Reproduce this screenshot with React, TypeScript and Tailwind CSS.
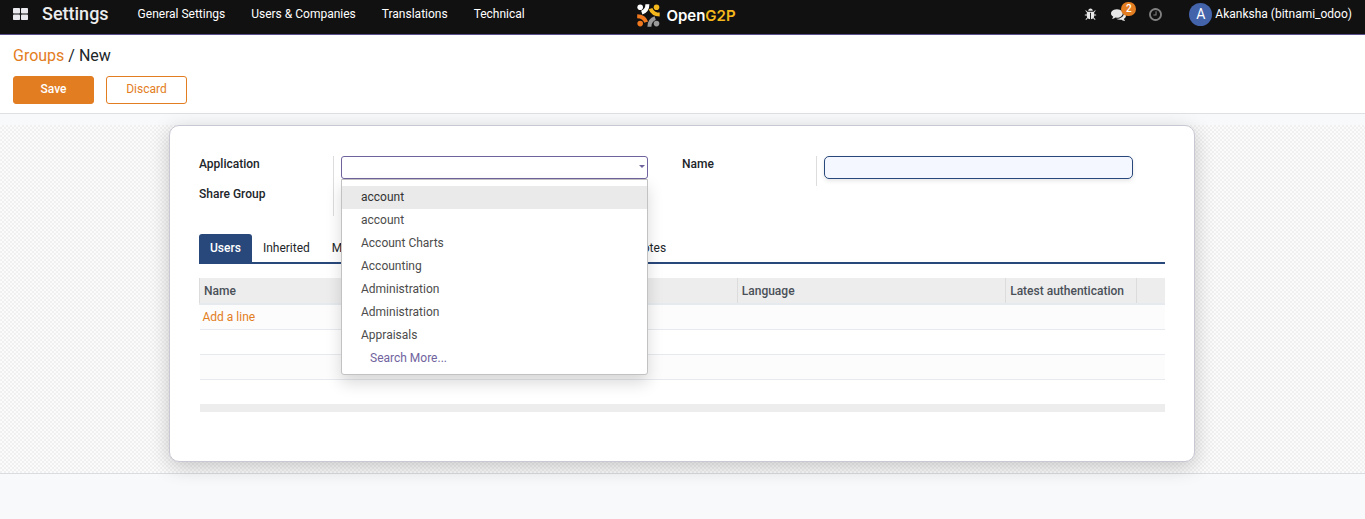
import React from "react";

const menuItems = ["General Settings", "Users & Companies", "Translations", "Technical"];
const tabs = ["Users", "Inherited", "Menus", "Views", "Access Rights", "Record Rules", "Notes"];
const applications = [
  "account",
  "account",
  "Account Charts",
  "Accounting",
  "Administration",
  "Administration",
  "Appraisals",
];

function AppsIcon() {
  return (
    <svg width="15" height="12" viewBox="0 0 15 12" fill="#e9e9ee" aria-hidden="true">
      <rect x="0" y="0" width="7" height="5.5" rx="0.8" />
      <rect x="8" y="0" width="7" height="5.5" rx="0.8" />
      <rect x="0" y="6.5" width="7" height="5.5" rx="0.8" />
      <rect x="8" y="6.5" width="7" height="5.5" rx="0.8" />
    </svg>
  );
}

function BugIcon() {
  return (
    <svg width="13" height="13" viewBox="0 0 1792 1792" fill="currentColor" aria-hidden="true">
      <path d="M1696 960q0 26-19 45t-45 19h-224q0 171-67 290l208 209q19 19 19 45t-19 45q-18 19-45 19t-45-19l-198-197q-5 5-15 13t-42 28.5-65 36.5-82 29-97 13v-896h-128v896q-51 0-101.5-13.5t-87-33-66-39-43.5-32.5l-15-14-183 207q-20 21-48 21-24 0-43-16-19-18-20.500-44.500t15.500-46.500l202-227q-58-114-58-274h-224q-26 0-45-19t-19-45 19-45 45-19h224v-294l-173-173q-19-19-19-45t19-45 45-19 45 19l173 173h844l173-173q19-19 45-19t45 19 19 45-19 45l-173 173v294h224q26 0 45 19t19 45zm-480-576h-640q0-133 93.500-226.500t226.500-93.500 226.500 93.500 93.500 226.500z" />
    </svg>
  );
}

function CommentsIcon() {
  return (
    <svg width="15" height="15" viewBox="0 0 1792 1792" fill="currentColor" aria-hidden="true">
      <path d="M1408 768q0 139-94 257t-256.500 186.500-353.500 68.500q-86 0-176-16-124 88-278 128-36 9-86 16h-3q-11 0-20.500-8t-11.500-21q-1-3-1-6.500t.5-6.500 2-6l2.500-5 3.500-5.500 4-5 4.500-5 4-4.500q5-6 23-25t26-29.500 22.500-29 25-38.500 20.500-44q-124-72-195-177t-71-224q0-139 94-257t256.500-186.500 353.500-68.500 353.500 68.500 256.500 186.500 94 257zm384 256q0 120-71 224.500t-195 176.500q10 24 20.500 44t25 38.500 22.500 29 26 29.500 23 25q1 1 4 4.500t4.500 5 4 5 3.500 5.500l2.500 5 2 6 .5 6.500-1 6.500q-3 14-13 22t-22 7q-50-7-86-16-154-40-278-128-90 16-176 16-271 0-472-132 58 4 88 4 161 0 309-45t264-129q125-92 192-212t67-254q0-77-23-152 129 71 204 178t75 230z" />
    </svg>
  );
}

function ClockIcon() {
  return (
    <svg width="15" height="15" viewBox="0 0 1792 1792" fill="currentColor" aria-hidden="true">
      <path d="M1024 544v448q0 14-9 23t-23 9h-320q-14 0-23-9t-9-23v-64q0-14 9-23t23-9h224v-352q0-14 9-23t23-9h64q14 0 23 9t9 23zm416 352q0-148-73-273t-198-198-273-73-273 73-198 198-73 273 73 273 198 198 273 73 273-73 198-198 73-273zm224 0q0 209-103 385.500t-279.500 279.500-385.500 103-385.500-103-279.500-279.500-103-385.500 103-385.500 279.500-279.500 385.500-103 385.500 103 279.500 279.500 103 385.500z" />
    </svg>
  );
}

function LogoMark() {
  return (
    <svg width="23" height="23" viewBox="0 0 23 23" fill="none" aria-hidden="true">
      <circle cx="3.200" cy="3.200" r="2.800" fill="#fff" />
      <circle cx="19.500" cy="3.200" r="2.800" fill="#f5b81c" />
      <circle cx="3.200" cy="19.600" r="2.800" fill="#f0781e" />
      <circle cx="19.500" cy="19.600" r="2.800" fill="#9a9a9a" />
      <path d="M10.400 0.300C10.400 4.600 8.600 7.300 4.800 8.600" stroke="#fff" strokeWidth="4" />
      <path d="M13.500 4.600C15 8.500 18 10.500 22.700 10.600" stroke="#f5b81c" strokeWidth="4" />
      <path d="M0.200 12.200C4.800 12.300 7.900 14.200 9.200 18.200" stroke="#f0781e" strokeWidth="4" />
      <path d="M12.400 22.700C12.500 18.300 14.400 15.500 18.200 14.200" stroke="#9a9a9a" strokeWidth="4" />
    </svg>
  );
}

function Navbar() {
  return (
    <header className="grid h-[35px] grid-cols-[1fr_auto_1fr] border-b border-[#5a4f8a] bg-[#111111] text-xs text-white">
      <nav className="flex h-7 items-center pl-[13px]">
        <button type="button" aria-label="Applications">
          <AppsIcon />
        </button>
        <a href="#settings" className="ml-[14px] text-lg font-medium leading-7 text-[#ececec]">
          Settings
        </a>
        <ul className="ml-[29px] flex gap-[26px] whitespace-nowrap">
          {menuItems.map((item) => (
            <li key={item}>
              <a href="#menu">{item}</a>
            </li>
          ))}
        </ul>
      </nav>
      <a href="#home" className="flex h-[31px] items-center gap-1.5 pl-2">
        <LogoMark />
        <span className="font-['Inter'] text-[15px] font-semibold leading-none">
          Open<span className="text-[#f5b81c]">G2P</span>
        </span>
      </a>
      <div className="flex h-7 items-center justify-end whitespace-nowrap pr-[13px]">
        <button type="button" aria-label="Developer tools" className="mr-[14px] text-[#e8e8e8]">
          <BugIcon />
        </button>
        <button type="button" aria-label="Messages" className="relative mr-[22px] text-[#e8e8e8]">
          <CommentsIcon />
          <span className="absolute -top-[5px] left-[10px] h-[14px] w-[15px] rounded-full bg-[#e37d22] text-center text-[10px] font-medium leading-[14px] text-white">
            2
          </span>
        </button>
        <button type="button" aria-label="Activities" className="mr-[26px] text-[#808080]">
          <ClockIcon />
        </button>
        <button type="button" className="flex items-center gap-[3px]">
          <span className="flex size-[23px] items-center justify-center rounded-full bg-[#4363ab] text-sm">
            A
          </span>
          Akanksha (bitnami_odoo)
        </button>
      </div>
    </header>
  );
}

function ApplicationField() {
  return (
    <div className="relative">
      <input
        id="application"
        type="text"
        role="combobox"
        aria-expanded="true"
        aria-controls="application-options"
        className="block h-[23px] w-full rounded-[3px] border border-[#71639e] bg-white px-1 outline-none"
      />
      <svg
        className="pointer-events-none absolute right-[3px] top-[9px]"
        width="6"
        height="3"
        viewBox="0 0 6 3"
        fill="#71639e"
        aria-hidden="true"
      >
        <path d="M0 0h6L3 3z" />
      </svg>
      <ul
        id="application-options"
        role="listbox"
        className="absolute inset-x-0 top-full z-10 rounded-b-[3px] border border-[#c2c2c2] bg-white pb-1 pt-1.5 leading-[23px] text-[#4c4c4c] shadow-[0_8px_16px_rgba(0,0,0,0.15)]"
      >
        {applications.map((name, i) => (
          <li
            key={i}
            role="option"
            aria-selected={i === 0}
            className="pl-[19px] aria-selected:bg-[#eaeaea] aria-selected:text-[#333333]"
          >
            {name}
          </li>
        ))}
        <li role="option" aria-selected="false" className="pl-7 text-[#71639e]">
          Search More...
        </li>
      </ul>
    </div>
  );
}

function FieldGroups() {
  return (
    <div className="grid grid-cols-2">
      <div className="grid grid-cols-[134px_1fr] grid-rows-[30px_30px] pr-[34px]">
        <label htmlFor="application" className="font-medium leading-4">
          Application
        </label>
        <div className="border-l border-[#dddddd] pl-[7px]">
          <ApplicationField />
        </div>
        <label htmlFor="share" className="font-medium leading-4">
          Share Group
        </label>
        <div className="border-l border-[#dddddd] pl-[7px]">
          <input id="share" type="checkbox" className="block size-[13px]" />
        </div>
      </div>
      <div className="grid grid-cols-[134px_1fr] grid-rows-[30px] pr-8">
        <label htmlFor="name" className="font-medium leading-4">
          Name
        </label>
        <div className="border-l border-[#dddddd] pl-[7px]">
          <input
            id="name"
            type="text"
            className="block h-[23px] w-full rounded-[5px] border border-[#28477a] bg-[#f4f7ff] px-1 shadow-[0_2px_4px_rgba(0,0,0,0.1)] outline-none"
          />
        </div>
      </div>
    </div>
  );
}

function UsersTable() {
  return (
    <table className="mt-[14px] w-full table-fixed border-collapse text-left">
      <colgroup>
        <col className="w-[27.8%]" />
        <col className="w-[27.9%]" />
        <col className="w-[27.8%]" />
        <col className="w-[13.5%]" />
        <col className="w-[3%]" />
      </colgroup>
      <thead>
        <tr className="h-[26px] border-b-2 border-[#e6eaee] bg-[#ededed] text-[#4a5058] [&>th]:border-l [&>th]:border-[#dcdcdc] [&>th]:px-1 [&>th]:py-0 [&>th]:font-medium">
          <th>Name</th>
          <th>Login</th>
          <th>Language</th>
          <th className="whitespace-nowrap">Latest authentication</th>
          <th aria-label="Actions" />
        </tr>
      </thead>
      <tbody>
        <tr className="h-[25px] border-b border-[#e6eaee] bg-[#fcfcfc]">
          <td colSpan={5} className="px-[3px] py-0">
            <a href="#add" className="text-[#e37d22]">
              Add a line
            </a>
          </td>
        </tr>
        <tr className="h-[25px] border-b border-[#e6eaee]">
          <td colSpan={5} />
        </tr>
        <tr className="h-[25px] border-b border-[#e6eaee] bg-[#fcfcfc]">
          <td colSpan={5} />
        </tr>
        <tr className="h-[25px]">
          <td colSpan={5} />
        </tr>
      </tbody>
      <tfoot>
        <tr className="h-2 bg-[#ededed]">
          <td colSpan={5} />
        </tr>
      </tfoot>
    </table>
  );
}

export default function App() {
  return (
    <div className="min-h-screen bg-[#f8f9fb] font-['Roboto',sans-serif] text-xs text-[#212529]">
      <Navbar />
      <div className="border-b border-[#dee0e6] bg-white px-[13px] pb-[9px] pt-2">
        <div className="text-base leading-[25px]">
          <a href="#groups" className="text-[#e37d22]">
            Groups
          </a>{" "}
          / New
        </div>
        <div className="mt-2 flex gap-3 leading-6">
          <button
            type="button"
            className="w-[81px] rounded-[3px] border border-[#e37d22] bg-[#e37d22] pb-0.5 font-medium text-white"
          >
            Save
          </button>
          <button
            type="button"
            className="w-[81px] rounded-[3px] border border-[#e37d22] bg-white pb-0.5 text-[#e37d22]"
          >
            Discard
          </button>
        </div>
      </div>
      <main className="mt-[11px] border-b border-[#d9dce1] bg-[repeating-conic-gradient(#f0f0f0_0_25%,#fbfbfb_0_50%)] bg-[length:4px_4px] pb-[11px] pr-px">
        <section className="mx-auto w-full max-w-[1026px] rounded-[10px] border border-[#c8c8d3] bg-white px-[29px] pb-[49px] pt-[30px] shadow-[0_5px_20px_rgba(0,0,0,0.2)]">
          <FieldGroups />
          <div role="tablist" className="mt-[18px] flex border-b-2 border-[#28477a]">
            {tabs.map((tab, i) => (
              <button
                key={tab}
                type="button"
                role="tab"
                aria-selected={i === 0}
                className="whitespace-nowrap rounded-t-[3px] px-[11px] leading-7 aria-selected:bg-[#28477a] aria-selected:font-medium aria-selected:text-white"
              >
                {tab}
              </button>
            ))}
          </div>
          <UsersTable />
        </section>
      </main>
    </div>
  );
}
